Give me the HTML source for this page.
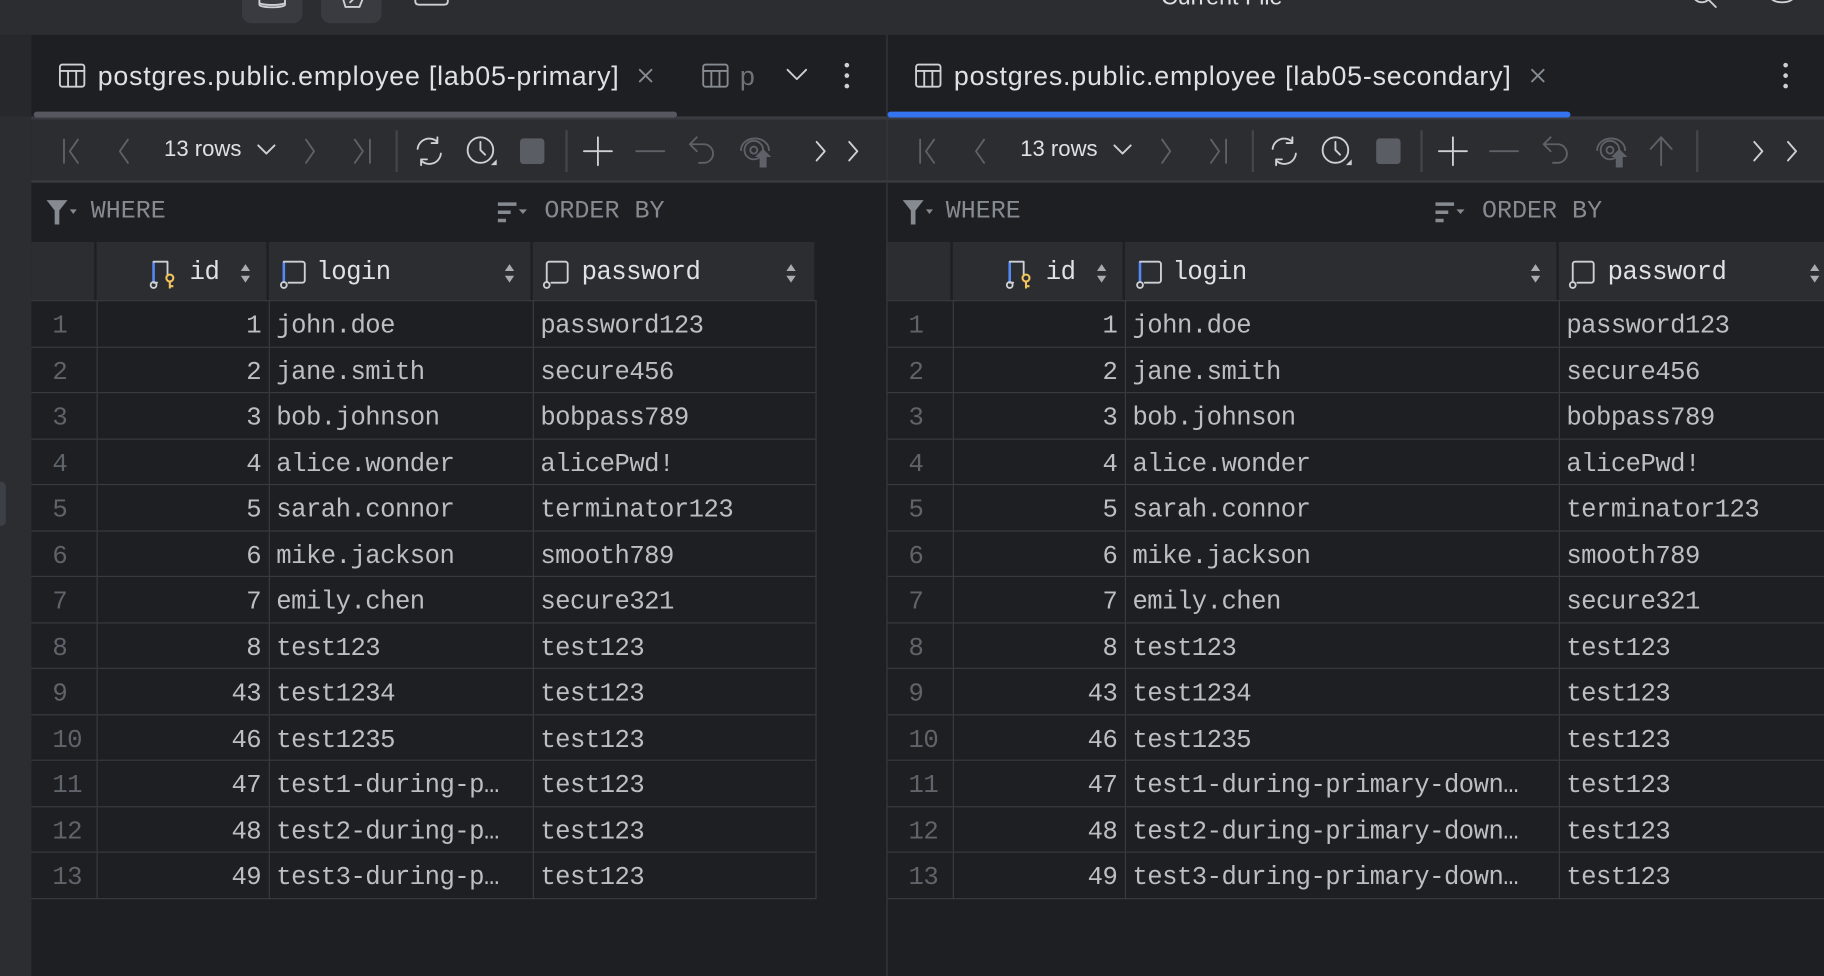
<!DOCTYPE html>
<html><head><meta charset="utf-8">
<style>
html,body{margin:0;padding:0;width:1824px;height:976px;overflow:hidden;background:#1e1f22}
#w{position:absolute;left:0;top:0;width:1568px;height:839px;transform:scale(1.16327,1.16329);transform-origin:0 0;background:#1e1f22;overflow:hidden;font-family:"Liberation Sans",sans-serif}
.a{position:absolute;white-space:nowrap}
.mono{font-family:"Liberation Mono","DejaVu Sans Mono",monospace}
table{border-collapse:collapse;table-layout:fixed;position:absolute}
td{border:1px solid #393b40;height:38.5px;padding:5px 6px 0 6px;font-size:22px;letter-spacing:-0.45px;color:#bcbec4;white-space:nowrap;overflow:hidden;font-family:"Liberation Mono",monospace;box-sizing:border-box}
td.n{color:#5f636a;text-align:left;padding-left:18px;border-left:none}
td.r{text-align:right}
.hdr{position:absolute;top:208px;height:50px;background:#2b2d30}
.hc{position:absolute;top:0;height:50px;border-right:2px solid #1e1f22;box-sizing:border-box}
.ht{color:#dfe1e5;font-size:22px;letter-spacing:-0.45px;top:222px}
.tab{color:#dfe1e5;font-size:23px;letter-spacing:0.7px;top:52px}
.fl{color:#868a91;font-size:21.5px;top:170px}
.ic{stroke:#ced0d6;fill:none;stroke-width:1.6;stroke-linecap:round;stroke-linejoin:round}
.dis{stroke:#5e6168}
</style></head><body><div id="w">
<!-- top bar -->
<div class="a" style="left:0;top:0;width:1568px;height:30px;background:#2b2d30"></div>
<div class="a" style="left:208px;top:-10px;width:52px;height:30px;border-radius:8px;background:#393b40"></div>
<div class="a" style="left:276px;top:-10px;width:52px;height:30px;border-radius:8px;background:#393b40"></div>
<svg class="a" style="left:220px;top:-6px" width="30" height="16"><path class="ic" d="M3 4v6c0 3 22 3 22 0V4M3 8c0 3 22 3 22 0"/></svg>
<svg class="a" style="left:290px;top:-6px" width="30" height="16"><path class="ic" d="M4 2l3 10h12l4-10M11 8l4-4"/></svg>
<svg class="a" style="left:355px;top:-6px" width="34" height="16"><path class="ic" d="M2 1v6c0 2 1 3 3 3h22c2 0 3-1 3-3V1"/></svg>
<div class="a" style="left:998px;top:-13px;color:#dfe1e5;font-size:20px">Current File</div>
<svg class="a" style="left:1300px;top:-6px;" width="30" height="14"><circle cx="15" cy="3" r="2" fill="#ced0d6"/></svg>
<svg class="a" style="left:1448px;top:-10px" width="40" height="22"><circle class="ic" cx="15" cy="4" r="8" stroke-width="2"/><path class="ic" stroke-width="2" d="M21 10l6 6"/></svg>
<svg class="a" style="left:1512px;top:-10px" width="40" height="22"><path class="ic" stroke-width="2" d="M8 2c0 6 4 10 12 10s12-4 12-10"/></svg>
<!-- left strip -->
<div class="a" style="left:0;top:30px;width:27px;height:809px;background:#2b2d30"></div>
<div class="a" style="left:0;top:30px;width:27px;height:70px;background:#27282c"></div>
<div class="a" style="left:-6px;top:414px;width:11px;height:38px;border-radius:4px;background:#3c3f45"></div>
<div class="a" style="left:762px;top:30px;width:1px;height:809px;background:#393b40"></div>

<!-- LEFT PANEL -->
<svg class="a" style="left:50px;top:54px" width="24" height="22"><rect class="ic" x="1.5" y="1.5" width="21" height="19" rx="2"/><path class="ic" d="M1.5 7h21M8.5 7v13.5M15.5 7v13.5"/></svg>
<div class="a tab" style="left:84px">postgres.public.employee [lab05-primary]</div>
<svg class="a" style="left:547px;top:57px" width="16" height="16"><path class="ic" style="stroke:#868a91" d="M3 3l10 10M13 3L3 13"/></svg>
<svg class="a" style="left:603px;top:54px" width="24" height="22"><rect class="ic" style="stroke:#868a91" x="1.5" y="1.5" width="21" height="19" rx="2"/><path class="ic" style="stroke:#868a91" d="M1.5 7h21M8.5 7v13.5M15.5 7v13.5"/></svg>
<div class="a tab" style="left:636px;color:#6f737a">p</div>
<svg class="a" style="left:674px;top:56px" width="22" height="16"><path class="ic" d="M3 4l8 8 8-8"/></svg>
<svg class="a" style="left:723px;top:52px" width="10" height="26"><circle cx="5" cy="4" r="2" fill="#ced0d6"/><circle cx="5" cy="13" r="2" fill="#ced0d6"/><circle cx="5" cy="22" r="2" fill="#ced0d6"/></svg>
<div class="a" style="left:27px;top:100px;width:735px;height:3px;background:#393b40"></div>
<div class="a" style="left:29px;top:96px;width:553px;height:5px;border-radius:3px;background:#55585e"></div>
<div class="a" style="left:27px;top:103px;width:735px;height:54px;background:#2b2d30"></div>
<div class="a" style="left:27px;top:155px;width:735px;height:2px;background:#393b40"></div>
<div class="a" style="left:0;top:103px">
<svg class="a" style="left:52px;top:14px" width="22" height="26"><path class="ic dis" d="M3 3v20M15 3L8 13l7 10"/></svg>
<svg class="a" style="left:98px;top:14px" width="18" height="26"><path class="ic dis" d="M12 3L5 13l7 10"/></svg>
<div class="a" style="left:141px;top:15px;color:#dfe1e5;font-size:19px">13 rows</div>
<svg class="a" style="left:219px;top:17px" width="20" height="16"><path class="ic" d="M3 5l7 7 7-7"/></svg>
<svg class="a" style="left:258px;top:14px" width="18" height="26"><path class="ic dis" d="M5 3l7 10-7 10"/></svg>
<svg class="a" style="left:300px;top:14px" width="22" height="26"><path class="ic dis" d="M5 3l7 10-7 10M18 3v20"/></svg>
<div class="a" style="left:340px;top:9px;width:1.5px;height:36px;background:#43454a"></div>
<svg class="a" style="left:354px;top:12px" width="30" height="30"><path class="ic" d="M5 13a10 10 0 0 1 17-6M25 17a10 10 0 0 1-17 6M22 3v5h-5M8 27v-5h5"/></svg>
<svg class="a" style="left:399px;top:11px" width="30" height="32"><circle class="ic" cx="14" cy="15" r="11"/><path class="ic" d="M14 8v7l4 4"/><path d="M23 28h5v-5z" fill="#ced0d6"/></svg>
<div class="a" style="left:447px;top:16px;width:21px;height:22px;border-radius:3px;background:#5a5d63"></div>
<div class="a" style="left:486px;top:9px;width:1.5px;height:36px;background:#43454a"></div>
<svg class="a" style="left:500px;top:13px" width="28" height="28"><path class="ic" d="M14 2v24M2 14h24"/></svg>
<svg class="a" style="left:545px;top:13px" width="28" height="28"><path class="ic dis" d="M2 14h24"/></svg>
<svg class="a" style="left:590px;top:11px" width="28" height="32"><path class="ic dis" d="M9 4L3 10l6 6M3 10h12a8 8 0 0 1 0 16h-4"/></svg>
<svg class="a" style="left:633px;top:11px" width="32" height="32"><path class="ic dis" d="M4 15a12 10 0 0 1 24 0"/><circle class="ic dis" cx="15" cy="15" r="8"/><circle class="ic dis" cx="15" cy="15" r="3"/><path d="M20 30v-9h-4l7-7 7 7h-4v9z" fill="#5e6168"/></svg>
<svg class="a" style="left:698px;top:16px" width="16" height="22"><path class="ic" d="M4 3l7 8-7 8"/></svg>
<svg class="a" style="left:726px;top:16px" width="16" height="22"><path class="ic" d="M4 3l7 8-7 8"/></svg>
</div>
<svg class="a" style="left:38px;top:170px" width="30" height="26"><path d="M2 2h18l-7 9v12h-4V11z" fill="#868a91"/><path d="M22 10h6l-3 4z" fill="#868a91"/></svg>
<div class="a mono fl" style="left:78px">WHERE</div>
<svg class="a" style="left:427px;top:172px" width="30" height="22"><path d="M1 2h16v3H1zM1 9h11v3H1zM1 16h7v3H1z" fill="#868a91"/><path d="M19 8h7l-3.5 4z" fill="#868a91"/></svg>
<div class="a mono fl" style="left:468px">ORDER BY</div>
<div class="hdr" style="left:27px;width:673px">
<div class="hc" style="left:0;width:56px"></div>
<div class="hc" style="left:56px;width:148px"></div>
<div class="hc" style="left:204px;width:227px"></div>
<div class="hc" style="left:431px;width:242px;border-right:none"></div>
</div>
<svg class="a" style="left:128px;top:222px" width="32" height="28"><path d="M4 3v18" stroke="#548af7" stroke-width="2.2"/><path class="ic" d="M4 3h12v12M4 21h3"/><circle class="ic" cx="4" cy="23" r="2.5"/><circle cx="18" cy="17" r="3" fill="none" stroke="#f2c55c" stroke-width="1.8"/><path d="M18 20v6M18 24h3" stroke="#f2c55c" stroke-width="1.8"/></svg>
<div class="a mono ht" style="left:163px">id</div>
<svg class="a" style="left:205px;top:225px" width="12" height="20"><path d="M2 8l4-6 4 6zM2 12l4 6 4-6z" fill="#a8abb0"/></svg>
<svg class="a" style="left:240px;top:222px" width="28" height="28"><path d="M4 3v18" stroke="#548af7" stroke-width="2.2"/><path class="ic" d="M4 3h16a2 2 0 0 1 2 2v14a2 2 0 0 1-2 2H8"/><circle class="ic" cx="4" cy="23" r="2.5"/></svg>
<div class="a mono ht" style="left:272px">login</div>
<svg class="a" style="left:432px;top:225px" width="12" height="20"><path d="M2 8l4-6 4 6zM2 12l4 6 4-6z" fill="#a8abb0"/></svg>
<svg class="a" style="left:466px;top:222px" width="28" height="28"><path class="ic" d="M4 20V5a2 2 0 0 1 2-2h14a2 2 0 0 1 2 2v14a2 2 0 0 1-2 2H8"/><circle class="ic" cx="4" cy="23" r="2.5"/></svg>
<div class="a mono ht" style="left:500px">password</div>
<svg class="a" style="left:674px;top:225px" width="12" height="20"><path d="M2 8l4-6 4 6zM2 12l4 6 4-6z" fill="#a8abb0"/></svg>
<table style="left:27px;top:258px;width:674px">
<colgroup><col style="width:56px"><col style="width:148px"><col style="width:227px"><col style="width:243px"></colgroup>
<tr style="height:39.5px"><td class="n">1</td><td class="r">1</td><td>john.doe</td><td>password123</td></tr>
<tr style="height:39.5px"><td class="n">2</td><td class="r">2</td><td>jane.smith</td><td>secure456</td></tr>
<tr style="height:39.5px"><td class="n">3</td><td class="r">3</td><td>bob.johnson</td><td>bobpass789</td></tr>
<tr style="height:39.5px"><td class="n">4</td><td class="r">4</td><td>alice.wonder</td><td>alicePwd!</td></tr>
<tr style="height:39.5px"><td class="n">5</td><td class="r">5</td><td>sarah.connor</td><td>terminator123</td></tr>
<tr style="height:39.5px"><td class="n">6</td><td class="r">6</td><td>mike.jackson</td><td>smooth789</td></tr>
<tr style="height:39.5px"><td class="n">7</td><td class="r">7</td><td>emily.chen</td><td>secure321</td></tr>
<tr style="height:39.5px"><td class="n">8</td><td class="r">8</td><td>test123</td><td>test123</td></tr>
<tr style="height:39.5px"><td class="n">9</td><td class="r">43</td><td>test1234</td><td>test123</td></tr>
<tr style="height:39.5px"><td class="n">10</td><td class="r">46</td><td>test1235</td><td>test123</td></tr>
<tr style="height:39.5px"><td class="n">11</td><td class="r">47</td><td>test1-during-p…</td><td>test123</td></tr>
<tr style="height:39.5px"><td class="n">12</td><td class="r">48</td><td>test2-during-p…</td><td>test123</td></tr>
<tr style="height:39.5px"><td class="n">13</td><td class="r">49</td><td>test3-during-p…</td><td>test123</td></tr>
</table>

<!-- RIGHT PANEL -->
<svg class="a" style="left:786px;top:54px" width="24" height="22"><rect class="ic" x="1.5" y="1.5" width="21" height="19" rx="2"/><path class="ic" d="M1.5 7h21M8.5 7v13.5M15.5 7v13.5"/></svg>
<div class="a tab" style="left:820px">postgres.public.employee [lab05-secondary]</div>
<svg class="a" style="left:1314px;top:57px" width="16" height="16"><path class="ic" style="stroke:#868a91" d="M3 3l10 10M13 3L3 13"/></svg>
<svg class="a" style="left:1530px;top:52px" width="10" height="26"><circle cx="5" cy="4" r="2" fill="#ced0d6"/><circle cx="5" cy="13" r="2" fill="#ced0d6"/><circle cx="5" cy="22" r="2" fill="#ced0d6"/></svg>
<div class="a" style="left:763px;top:100px;width:805px;height:3px;background:#393b40"></div>
<div class="a" style="left:763px;top:96px;width:587px;height:5px;border-radius:3px;background:#3574f0"></div>
<div class="a" style="left:763px;top:103px;width:805px;height:54px;background:#2b2d30"></div>
<div class="a" style="left:763px;top:155px;width:805px;height:2px;background:#393b40"></div>
<div class="a" style="left:736px;top:103px">
<svg class="a" style="left:52px;top:14px" width="22" height="26"><path class="ic dis" d="M3 3v20M15 3L8 13l7 10"/></svg>
<svg class="a" style="left:98px;top:14px" width="18" height="26"><path class="ic dis" d="M12 3L5 13l7 10"/></svg>
<div class="a" style="left:141px;top:15px;color:#dfe1e5;font-size:19px">13 rows</div>
<svg class="a" style="left:219px;top:17px" width="20" height="16"><path class="ic" d="M3 5l7 7 7-7"/></svg>
<svg class="a" style="left:258px;top:14px" width="18" height="26"><path class="ic dis" d="M5 3l7 10-7 10"/></svg>
<svg class="a" style="left:300px;top:14px" width="22" height="26"><path class="ic dis" d="M5 3l7 10-7 10M18 3v20"/></svg>
<div class="a" style="left:340px;top:9px;width:1.5px;height:36px;background:#43454a"></div>
<svg class="a" style="left:353px;top:12px" width="30" height="30"><path class="ic" d="M5 13a10 10 0 0 1 17-6M25 17a10 10 0 0 1-17 6M22 3v5h-5M8 27v-5h5"/></svg>
<svg class="a" style="left:398px;top:11px" width="30" height="32"><circle class="ic" cx="14" cy="15" r="11"/><path class="ic" d="M14 8v7l4 4"/><path d="M23 28h5v-5z" fill="#ced0d6"/></svg>
<div class="a" style="left:447px;top:16px;width:21px;height:22px;border-radius:3px;background:#5a5d63"></div>
<div class="a" style="left:485px;top:9px;width:1.5px;height:36px;background:#43454a"></div>
<svg class="a" style="left:499px;top:13px" width="28" height="28"><path class="ic" d="M14 2v24M2 14h24"/></svg>
<svg class="a" style="left:543px;top:13px" width="28" height="28"><path class="ic dis" d="M2 14h24"/></svg>
<svg class="a" style="left:588px;top:11px" width="28" height="32"><path class="ic dis" d="M9 4L3 10l6 6M3 10h12a8 8 0 0 1 0 16h-4"/></svg>
<svg class="a" style="left:633px;top:11px" width="32" height="32"><path class="ic dis" d="M4 15a12 10 0 0 1 24 0"/><circle class="ic dis" cx="15" cy="15" r="8"/><circle class="ic dis" cx="15" cy="15" r="3"/><path d="M20 30v-9h-4l7-7 7 7h-4v9z" fill="#5e6168"/></svg>
<svg class="a" style="left:680px;top:11px" width="24" height="32"><path class="ic dis" d="M12 28V5M3 14l9-10 9 10"/></svg>
<div class="a" style="left:722px;top:9px;width:1.5px;height:36px;background:#43454a"></div>
<svg class="a" style="left:768px;top:16px" width="16" height="22"><path class="ic" d="M4 3l7 8-7 8"/></svg>
<svg class="a" style="left:797px;top:16px" width="16" height="22"><path class="ic" d="M4 3l7 8-7 8"/></svg>
</div>
<svg class="a" style="left:774px;top:170px" width="30" height="26"><path d="M2 2h18l-7 9v12h-4V11z" fill="#868a91"/><path d="M22 10h6l-3 4z" fill="#868a91"/></svg>
<div class="a mono fl" style="left:813px">WHERE</div>
<svg class="a" style="left:1233px;top:172px" width="30" height="22"><path d="M1 2h16v3H1zM1 9h11v3H1zM1 16h7v3H1z" fill="#868a91"/><path d="M19 8h7l-3.5 4z" fill="#868a91"/></svg>
<div class="a mono fl" style="left:1274px">ORDER BY</div>
<div class="hdr" style="left:763px;width:805px">
<div class="hc" style="left:0;width:56px"></div>
<div class="hc" style="left:56px;width:148px"></div>
<div class="hc" style="left:204px;width:373px"></div>
<div class="hc" style="left:577px;width:300px;border-right:none"></div>
</div>
<svg class="a" style="left:864px;top:222px" width="32" height="28"><path d="M4 3v18" stroke="#548af7" stroke-width="2.2"/><path class="ic" d="M4 3h12v12M4 21h3"/><circle class="ic" cx="4" cy="23" r="2.5"/><circle cx="18" cy="17" r="3" fill="none" stroke="#f2c55c" stroke-width="1.8"/><path d="M18 20v6M18 24h3" stroke="#f2c55c" stroke-width="1.8"/></svg>
<div class="a mono ht" style="left:899px">id</div>
<svg class="a" style="left:941px;top:225px" width="12" height="20"><path d="M2 8l4-6 4 6zM2 12l4 6 4-6z" fill="#a8abb0"/></svg>
<svg class="a" style="left:976px;top:222px" width="28" height="28"><path d="M4 3v18" stroke="#548af7" stroke-width="2.2"/><path class="ic" d="M4 3h16a2 2 0 0 1 2 2v14a2 2 0 0 1-2 2H8"/><circle class="ic" cx="4" cy="23" r="2.5"/></svg>
<div class="a mono ht" style="left:1008px">login</div>
<svg class="a" style="left:1314px;top:225px" width="12" height="20"><path d="M2 8l4-6 4 6zM2 12l4 6 4-6z" fill="#a8abb0"/></svg>
<svg class="a" style="left:1348px;top:222px" width="28" height="28"><path class="ic" d="M4 20V5a2 2 0 0 1 2-2h14a2 2 0 0 1 2 2v14a2 2 0 0 1-2 2H8"/><circle class="ic" cx="4" cy="23" r="2.5"/></svg>
<div class="a mono ht" style="left:1382px">password</div>
<svg class="a" style="left:1554px;top:225px" width="12" height="20"><path d="M2 8l4-6 4 6zM2 12l4 6 4-6z" fill="#a8abb0"/></svg>
<table style="left:763px;top:258px;width:877px">
<colgroup><col style="width:56px"><col style="width:148px"><col style="width:373px"><col style="width:300px"></colgroup>
<tr style="height:39.5px"><td class="n">1</td><td class="r">1</td><td>john.doe</td><td>password123</td></tr>
<tr style="height:39.5px"><td class="n">2</td><td class="r">2</td><td>jane.smith</td><td>secure456</td></tr>
<tr style="height:39.5px"><td class="n">3</td><td class="r">3</td><td>bob.johnson</td><td>bobpass789</td></tr>
<tr style="height:39.5px"><td class="n">4</td><td class="r">4</td><td>alice.wonder</td><td>alicePwd!</td></tr>
<tr style="height:39.5px"><td class="n">5</td><td class="r">5</td><td>sarah.connor</td><td>terminator123</td></tr>
<tr style="height:39.5px"><td class="n">6</td><td class="r">6</td><td>mike.jackson</td><td>smooth789</td></tr>
<tr style="height:39.5px"><td class="n">7</td><td class="r">7</td><td>emily.chen</td><td>secure321</td></tr>
<tr style="height:39.5px"><td class="n">8</td><td class="r">8</td><td>test123</td><td>test123</td></tr>
<tr style="height:39.5px"><td class="n">9</td><td class="r">43</td><td>test1234</td><td>test123</td></tr>
<tr style="height:39.5px"><td class="n">10</td><td class="r">46</td><td>test1235</td><td>test123</td></tr>
<tr style="height:39.5px"><td class="n">11</td><td class="r">47</td><td>test1-during-primary-down…</td><td>test123</td></tr>
<tr style="height:39.5px"><td class="n">12</td><td class="r">48</td><td>test2-during-primary-down…</td><td>test123</td></tr>
<tr style="height:39.5px"><td class="n">13</td><td class="r">49</td><td>test3-during-primary-down…</td><td>test123</td></tr>
</table>
</div></body></html>
